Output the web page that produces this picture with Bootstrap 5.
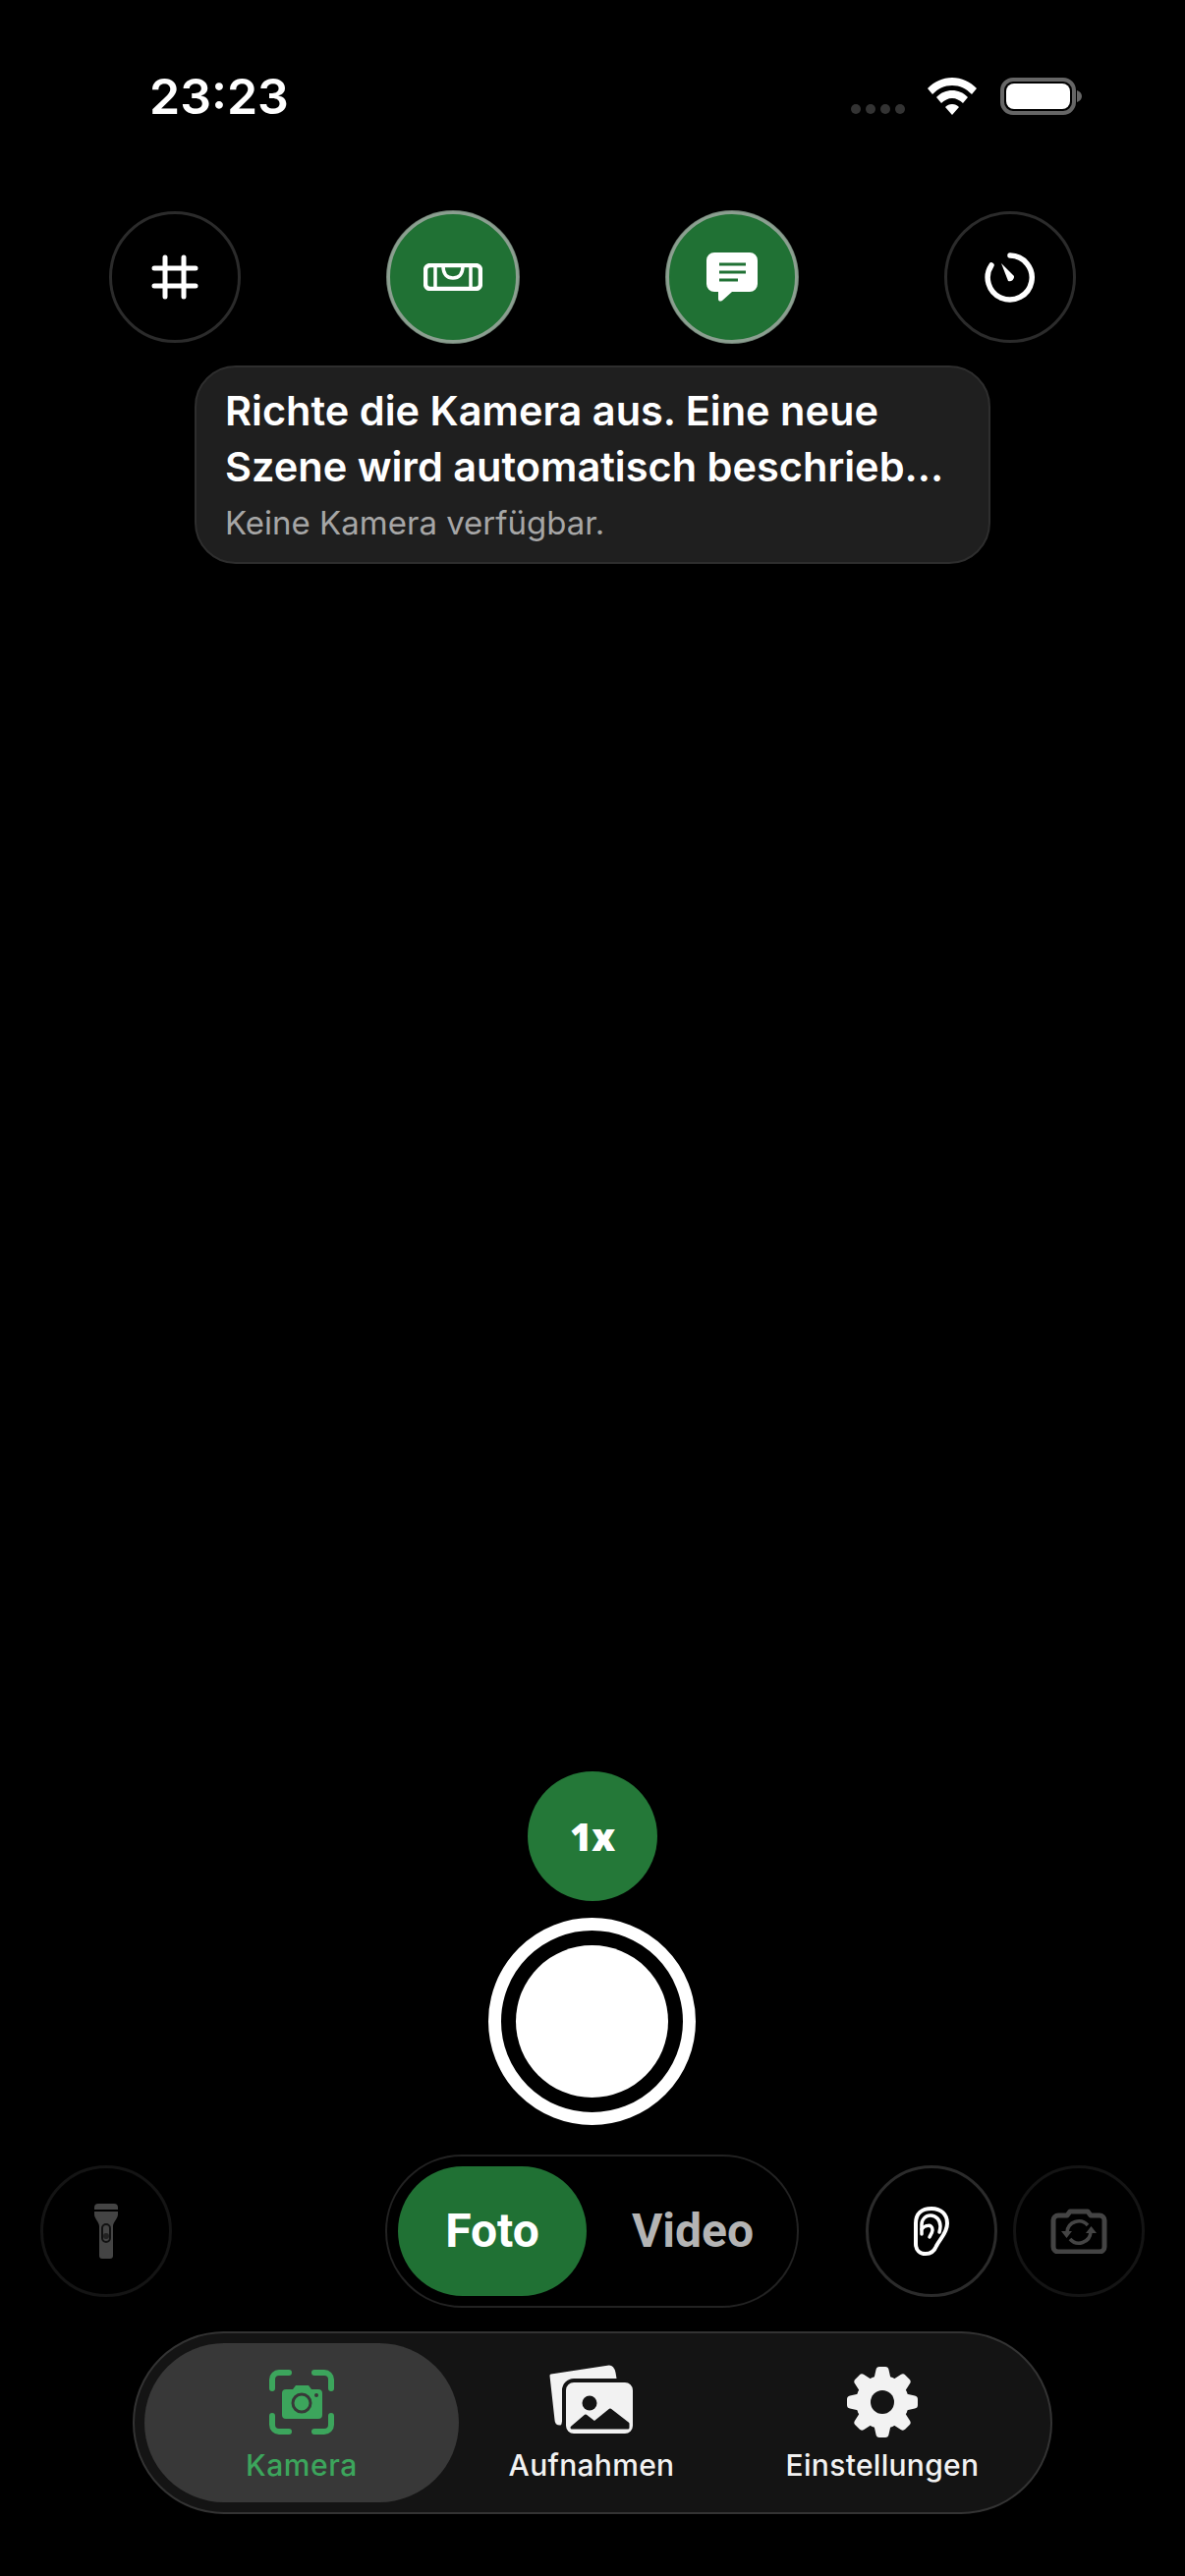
<!doctype html>
<html lang="de">
<head>
<meta charset="utf-8">
<title>Kamera</title>
<link href="https://cdn.jsdelivr.net/npm/bootstrap@5.3.0/dist/css/bootstrap.min.css" rel="stylesheet">
<style>
html,body{background:#000;margin:0}
.cam-page{width:1206px;height:2622px;background:#000;font-family:Inter,"Liberation Sans",sans-serif;color:#fff;overflow:hidden}
.cam-status{height:78px;margin-top:76px;padding:0 104px 0 152px}
.cam-status svg{margin-top:3px}
.cam-time{font-size:50px;font-weight:600;line-height:44px;letter-spacing:0}
.cam-dots{gap:5px;margin:30px 23px 0 0}
.cam-dots i{width:10px;height:10px;border-radius:50%;background:#333;display:block}
.cam-top{margin:61px 111px 0}
.cam-round{width:134px;height:134px;border-radius:50%;border:3px solid #2b2b2b;flex:none;background:#000}
.cam-on{background:#207134;border-color:#8b9f90;box-shadow:0 0 0 1px #6f7f73}
.cam-dim{border-color:#141414}
.cam-tip{width:810px;height:202px;margin:23px 0 0 198px;padding:16px 29px;background:#1f1f1f;border:2px solid #2e2e2e;border-radius:42px}
.cam-tip-t{font-size:41.500px;line-height:57px;font-weight:600;white-space:nowrap}
.cam-tip-s{font-size:33px;line-height:40px;color:#a6a6a6;margin-top:8px}
.cam-zoom{width:132px;height:132px;border-radius:50%;background:#247838;font-family:"Open Sans",sans-serif;font-weight:800;font-size:38px;margin:0 auto}
.cam-shutter{width:211px;height:211px;border-radius:50%;border:13px solid #fff;padding:15px;margin:17px 0 0 497px}
.cam-shutter span{display:block;width:100%;height:100%;border-radius:50%;background:#fff}
.cam-tools{margin-top:30px;padding-left:41px}
.cam-mode{width:421px;height:156px;border:2px solid #222;border-radius:78px;margin:0 68px 0 217px;padding:10px 11px;font-family:Roboto,sans-serif;font-weight:700;font-size:48px}
.cam-foto{width:192px;height:132px;border-radius:66px;background:#207134}
.cam-video{color:#b4b4b4;margin-left:46px}
.cam-flip{margin-left:16px}
.cam-nav{width:936px;height:186px;margin:24px 0 63px 135px;padding:10px;background:#141414;border:2px solid #333;border-radius:93px;display:grid;grid-template-columns:320px 270px 322px}
.cam-item{height:162px;border-radius:81px;padding-top:22px;font-size:30px;font-weight:500;color:#f2f2f2;line-height:38px;letter-spacing:.3px}
.cam-ico{height:83px}
.cam-ico svg{display:block}
.cam-i1 svg{margin-top:5px}
.cam-i3 svg{margin-top:2px}
.cam-act{background:#383838;color:#3ca55c;letter-spacing:.6px}
</style>
</head>
<body>
<main class="cam-page d-flex flex-column">
  <div class="cam-status d-flex justify-content-between">
    <div class="cam-time">23:23</div>
    <div class="d-flex align-items-start">
      <div class="cam-dots d-flex"><i></i><i></i><i></i><i></i></div>
      <svg width="50" height="38" viewBox="0 0 50 38" class="me-4" aria-hidden="true"><path fill="#fff" d="M25 0C15 0 7 4 0 11l5 6c6-6 12-9 20-9s14 3 20 9l5-6C43 4 35 0 25 0z"/><path fill="#fff" d="M25 13c-6 0-11 2-16 7l5 6c3-3 7-5 11-5s8 2 11 5l5-6c-5-5-10-7-16-7z"/><path fill="#fff" d="M25 27c-3 0-5 1-7 3l7 8 7-8c-2-2-4-3-7-3z"/></svg>
      <svg width="84" height="38" viewBox="0 0 84 38" aria-hidden="true"><rect x="2" y="2" width="73" height="34" rx="11" fill="none" stroke="#666" stroke-width="4"/><rect x="6" y="6" width="65" height="26" rx="8" fill="#fff"/><path fill="#666" d="M78 13c3 1 5 3 5 6s-2 5-5 6z"/></svg>
    </div>
  </div>

  <div class="cam-top d-flex justify-content-between">
    <div class="cam-round d-flex align-items-center justify-content-center">
      <svg width="52" height="50" viewBox="0 0 52 50" aria-hidden="true"><path d="M16 5v40M35 5v40M5 16h42M5 34h42" fill="none" stroke="#fff" stroke-width="5" stroke-linecap="round"/></svg>
    </div>
    <div class="cam-round cam-on d-flex align-items-center justify-content-center">
      <svg width="60" height="28" viewBox="0 0 60 28" aria-hidden="true"><rect x="2" y="2" width="56" height="24" rx="5" fill="none" stroke="#fff" stroke-width="4.500"/><path d="M12 3v22M48 3v22" stroke="#fff" stroke-width="3.500"/><path d="M20 3c0 8 4 12 10 12s10-4 10-12" fill="none" stroke="#fff" stroke-width="3.500"/></svg>
    </div>
    <div class="cam-round cam-on d-flex align-items-center justify-content-center">
      <svg width="54" height="52" viewBox="0 0 54 52" aria-hidden="true"><path fill="#fff" d="M9 1h36a8 8 0 0 1 8 8v24a8 8 0 0 1-8 8H27L17 50c-2 1-4 1-4-2v-7H9a8 8 0 0 1-8-8V9a8 8 0 0 1 8-8z"/><path d="M14 13h27M14 21h27M14 29h19" stroke="#207134" stroke-width="3"/></svg>
    </div>
    <div class="cam-round d-flex align-items-center justify-content-center">
      <svg width="52" height="52" viewBox="0 0 52 52" aria-hidden="true"><path d="M26 4a22.500 22.500 0 1 1-19 10" fill="none" stroke="#fff" stroke-width="5.500" stroke-linecap="round"/><path fill="#fff" d="M17 12l13 13a4.500 4.500 0 0 1-6 5z"/></svg>
    </div>
  </div>

  <div class="cam-tip">
    <div class="cam-tip-t">Richte die Kamera aus. Eine neue<br>Szene wird automatisch beschrieb...</div>
    <div class="cam-tip-s">Keine Kamera verfügbar.</div>
  </div>

  <div class="mt-auto">
    <div class="cam-zoom d-flex align-items-center justify-content-center">1x</div>
    <div class="cam-shutter"><span></span></div>
    <div class="cam-tools d-flex align-items-center">
      <div class="cam-round cam-dim d-flex align-items-center justify-content-center">
        <svg width="24" height="56" viewBox="0 0 24 56" aria-hidden="true"><path fill="#444" d="M4 0h16a4 4 0 0 1 4 4v2H0V4a4 4 0 0 1 4-4z"/><path fill="#444" d="M0 8h24v3c0 4-5 8-5 12v30a3 3 0 0 1-3 3H8a3 3 0 0 1-3-3V23C5 19 0 15 0 11z"/><rect x="8" y="21" width="8" height="18" rx="4" fill="none" stroke="#111" stroke-width="2"/><circle cx="12" cy="33" r="3" fill="#222"/></svg>
      </div>
      <div class="cam-mode d-flex align-items-center flex-shrink-0">
        <div class="cam-foto d-flex align-items-center justify-content-center">Foto</div>
        <div class="cam-video">Video</div>
      </div>
      <div class="cam-round d-flex align-items-center justify-content-center">
        <svg width="38" height="52" viewBox="0 0 38 52" aria-hidden="true"><g fill="none" stroke="#fff" stroke-linecap="round" stroke-linejoin="round"><path stroke-width="4" d="M3 18C3 8 9 3 19 3S35 9 35 18C35 28 28 33 24 41C22 46 19 49 13 49C7 49 3 45 3 39Z"/><path stroke-width="3.500" d="M9 29V19C9 14 13 10 18 10C24 10 28 15 28 21C28 23 27.500 25 27 27"/><path stroke-width="3.500" d="M9 24C12 20 20 18 20 25C20 27 18 30 17 32"/></g></svg>
      </div>
      <div class="cam-round cam-dim cam-flip d-flex align-items-center justify-content-center">
        <svg width="58" height="46" viewBox="0 0 58 46" aria-hidden="true"><path d="M8 7h9l3-4h18l3 4h9a5 5 0 0 1 5 5v27a5 5 0 0 1-5 5H8a5 5 0 0 1-5-5V12a5 5 0 0 1 5-5z" fill="none" stroke="#444" stroke-width="5" stroke-linejoin="round"/><path d="M17 24a12 12 0 0 1 21-7M41 24a12 12 0 0 1-21 7" fill="none" stroke="#444" stroke-width="3.500"/><path fill="#444" d="M11 23h11l-5.500 7zM36 25h11l-5.500-7z"/></svg>
      </div>
    </div>
    <nav class="cam-nav">
      <div class="cam-item cam-act d-flex flex-column align-items-center">
        <div class="cam-ico cam-i1"><svg width="66" height="66" viewBox="0 0 66 66" aria-hidden="true"><path d="M3 19V10a7 7 0 0 1 7-7h10M46 3h10a7 7 0 0 1 7 7v9M63 47v9a7 7 0 0 1-7 7H46M20 63H10a7 7 0 0 1-7-7v-9" fill="none" stroke="#3ca55c" stroke-width="6" stroke-linecap="round"/><path fill="#3ca55c" d="M17 20h7l3-4h13l3 4h7a4 4 0 0 1 4 4v22a4 4 0 0 1-4 4H17a4 4 0 0 1-4-4V24a4 4 0 0 1 4-4z"/><circle cx="33" cy="34" r="9" fill="#3ca55c" stroke="#383838" stroke-width="3"/><circle cx="48" cy="26" r="2" fill="#383838"/></svg></div>
        Kamera
      </div>
      <div class="cam-item d-flex flex-column align-items-center">
        <div class="cam-ico"><svg width="88" height="72" viewBox="0 0 88 72" aria-hidden="true"><path fill="#f2f2f2" stroke="#f2f2f2" stroke-width="3" stroke-linejoin="round" d="M3 11L62 2C65 2 66 4 67 8L69 20H20L12 60C9 60 8 58 8 56Z"/><rect x="16" y="16" width="72" height="56" rx="10" fill="#f2f2f2" stroke="#141414" stroke-width="4"/><circle cx="42" cy="39" r="7.500" fill="#141414"/><path fill="#141414" stroke="#141414" stroke-width="3" stroke-linejoin="round" d="M24 64L38 52L47 59L63 46L81 60V64Z"/></svg></div>
        Aufnahmen
      </div>
      <div class="cam-item d-flex flex-column align-items-center">
        <div class="cam-ico cam-i3"><svg width="72" height="72" viewBox="0 0 72 72" aria-hidden="true"><circle cx="36" cy="36" r="27" fill="#f2f2f2"/><g fill="#f2f2f2"><path id="gear-tooth" d="M27.500 12L29.500 3Q30 0 33 0H39Q42 0 42.500 3L44.500 12Z"/><use href="#gear-tooth" transform="rotate(45 36 36)"/><use href="#gear-tooth" transform="rotate(90 36 36)"/><use href="#gear-tooth" transform="rotate(135 36 36)"/><use href="#gear-tooth" transform="rotate(180 36 36)"/><use href="#gear-tooth" transform="rotate(225 36 36)"/><use href="#gear-tooth" transform="rotate(270 36 36)"/><use href="#gear-tooth" transform="rotate(315 36 36)"/></g><circle cx="36" cy="36" r="12" fill="#141414"/></svg></div>
        Einstellungen
      </div>
    </nav>
  </div>
</main>
<script src="https://cdn.jsdelivr.net/npm/bootstrap@5.3.0/dist/js/bootstrap.bundle.min.js"></script>
</body>
</html>
